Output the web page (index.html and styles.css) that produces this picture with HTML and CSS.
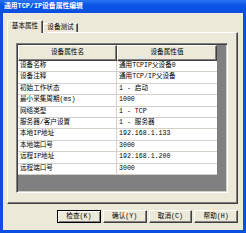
FILE: index.html
```html
<!DOCTYPE html>
<html>
<head>
<meta charset="utf-8">
<link rel="stylesheet" href="styles.css">
</head>
<body>
<div class="win">
  <div class="title">通用TCP/IP设备属性编辑</div>
  <div class="client">
    <div class="tabs">
      <div class="tab sel">基本属性</div>
      <div class="tab">设备测试</div>
    </div>
    <div class="panel">
      <div class="lv">
        <div class="hdr">
          <div class="hc c1">设备属性名</div>
          <div class="hc c2">设备属性值</div>
        </div>
        <div class="row"><div class="cell c1">设备名称</div><div class="cell c2">通用TCPIP父设备0</div></div>
        <div class="row"><div class="cell c1">设备注释</div><div class="cell c2">通用TCP/IP父设备</div></div>
        <div class="row"><div class="cell c1">初始工作状态</div><div class="cell c2">1 - 启动</div></div>
        <div class="row"><div class="cell c1">最小采集周期(ms)</div><div class="cell c2">1000</div></div>
        <div class="row"><div class="cell c1">网络类型</div><div class="cell c2">1 - TCP</div></div>
        <div class="row"><div class="cell c1">服务器/客户设置</div><div class="cell c2">1 - 服务器</div></div>
        <div class="row"><div class="cell c1">本地IP地址</div><div class="cell c2">192.168.1.133</div></div>
        <div class="row"><div class="cell c1">本地端口号</div><div class="cell c2">3000</div></div>
        <div class="row"><div class="cell c1">远程IP地址</div><div class="cell c2">192.168.1.200</div></div>
        <div class="row"><div class="cell c1">远程端口号</div><div class="cell c2">3000</div></div>
      </div>
    </div>
    <div class="btns">
      <div class="btn def">检查(<u>K</u>)</div>
      <div class="btn">确认(<u>Y</u>)</div>
      <div class="btn">取消(<u>C</u>)</div>
      <div class="btn">帮助(<u>H</u>)</div>
    </div>
  </div>
</div>
</body>
</html>
```
FILE: styles.css
```css
html, body {
  margin: 0;
  padding: 0;
  background: #ece9d8;
}
body {
  font-family: "Liberation Mono", "Noto Sans CJK SC", monospace;
  font-size: 6.6px;
  color: #000;
}
.win {
  width: 246px;
  height: 233px;
  box-sizing: border-box;
  background: #0a4fe0;
  padding: 0 3px 3px 3px;
  display: flex;
  flex-direction: column;
}
.title {
  height: 13px;
  line-height: 13px;
  color: #fff;
  font-weight: bold;
  font-size: 6.8px;
  background: linear-gradient(to bottom, #2a74f2 0%, #0a55e6 40%, #0a4fe0 100%);
  margin: 0 -3px;
  padding-left: 4px;
}
.client {
  flex: 1;
  background: #ece9d8;
  padding: 8px 5px 0 4px;
  display: flex;
  flex-direction: column;
}
.tabs {
  display: flex;
  align-items: flex-end;
  height: 11px;
  position: relative;
  z-index: 1;
}
.tab {
  box-sizing: border-box;
  width: 35px;
  height: 9px;
  line-height: 8px;
  text-align: center;
  border-top: 1px solid #fff;
  border-left: 1px solid #fff;
  border-right: 1px solid #404040;
  box-shadow: inset -1px 0 #808080;
  background: #ece9d8;
}
.tab.sel {
  width: 36px;
  height: 13px;
  line-height: 11px;
  margin-bottom: -1px;
}
.panel {
  box-sizing: border-box;
  width: 231px;
  height: 172px;
  border-top: 1px solid #fff;
  border-left: 1px solid #fff;
  border-right: 1px solid #404040;
  border-bottom: 1px solid #404040;
  box-shadow: inset -1px -1px #808080;
  padding: 10px 9px 10px 8px;
  display: flex;
}
.lv {
  flex: 1;
  background: #808080;
  border-top: 1px solid #808080;
  border-left: 1px solid #808080;
  border-right: 1px solid #fff;
  border-bottom: 1px solid #fff;
  box-shadow: inset 1px 1px #404040, inset -1px -1px #d4d0c8;
  padding: 1px;
  display: flex;
  flex-direction: column;
}
.hdr {
  display: flex;
  height: 16px;
  flex: none;
}
.hc {
  box-sizing: border-box;
  height: 16px;
  line-height: 14px;
  text-align: center;
  background: #ece9d8;
  border-top: 1px solid #fff;
  border-left: 1px solid #fff;
  border-right: 1px solid #404040;
  border-bottom: 1px solid #404040;
  box-shadow: inset -1px -1px #808080;
}
.c1 { width: 99px; }
.c2 { width: 100px; }
.row {
  display: flex;
  height: 11.4px;
  flex: none;
}
.cell {
  box-sizing: border-box;
  background: #fff;
  height: 11.4px;
  line-height: 10.4px;
  padding-left: 2px;
  border-bottom: 1px solid #d4d0c8;
  white-space: nowrap;
  overflow: hidden;
}
.cell.c1 {
  border-right: 1px solid #d4d0c8;
}
.btns {
  display: flex;
  gap: 2px;
  padding-left: 50px;
  margin-top: 6px;
}
.btn {
  box-sizing: border-box;
  width: 45px;
  height: 13px;
  line-height: 11px;
  text-align: center;
  background: #ece9d8;
  border-top: 1px solid #fff;
  border-left: 1px solid #fff;
  border-right: 1px solid #404040;
  border-bottom: 1px solid #404040;
  box-shadow: inset -1px -1px #808080;
}
.btn.def {
  border: 1px solid #000;
  box-shadow: inset 1px 1px #fff, inset -1px -1px #808080;
}
.btn u {
  text-decoration: none;
}
```
